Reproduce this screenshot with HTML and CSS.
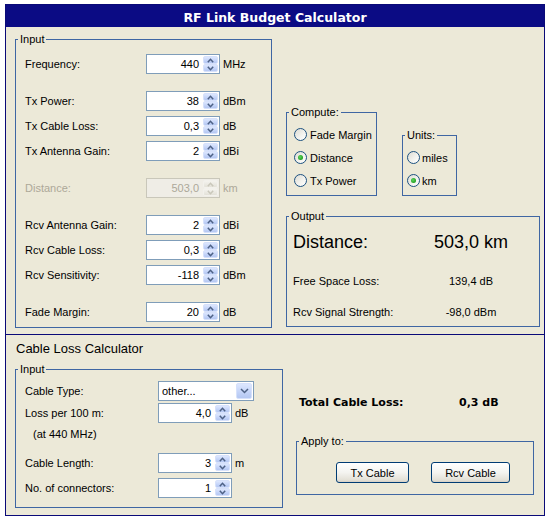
FILE: index.html
```html
<!DOCTYPE html>
<html>
<head>
<meta charset="utf-8">
<title>RF Link Budget Calculator</title>
<link rel="stylesheet" href="styles.css">
</head>
<body>
<div class="window">
  <div class="titlebar">RF Link Budget Calculator</div>

  <div class="upper">
    <fieldset class="grp in-grp">
      <legend>Input</legend>
      <div class="in-body">
        <div class="row"><span class="lbl">Frequency:</span><div class="spin"><span class="val">440</span><span class="sb"><i><svg viewBox="0 0 7 5"><path d="M0.8 4.2 L3.5 1.3 L6.2 4.2"/></svg></i><i><svg viewBox="0 0 7 5"><path d="M0.8 0.8 L3.5 3.7 L6.2 0.8"/></svg></i></span></div><span class="unit">MHz</span></div>

        <div class="row sp"><span class="lbl">Tx Power:</span><div class="spin"><span class="val">38</span><span class="sb"><i><svg viewBox="0 0 7 5"><path d="M0.8 4.2 L3.5 1.3 L6.2 4.2"/></svg></i><i><svg viewBox="0 0 7 5"><path d="M0.8 0.8 L3.5 3.7 L6.2 0.8"/></svg></i></span></div><span class="unit">dBm</span></div>
        <div class="row"><span class="lbl">Tx Cable Loss:</span><div class="spin"><span class="val">0,3</span><span class="sb"><i><svg viewBox="0 0 7 5"><path d="M0.8 4.2 L3.5 1.3 L6.2 4.2"/></svg></i><i><svg viewBox="0 0 7 5"><path d="M0.8 0.8 L3.5 3.7 L6.2 0.8"/></svg></i></span></div><span class="unit">dB</span></div>
        <div class="row"><span class="lbl">Tx Antenna Gain:</span><div class="spin"><span class="val">2</span><span class="sb"><i><svg viewBox="0 0 7 5"><path d="M0.8 4.2 L3.5 1.3 L6.2 4.2"/></svg></i><i><svg viewBox="0 0 7 5"><path d="M0.8 0.8 L3.5 3.7 L6.2 0.8"/></svg></i></span></div><span class="unit">dBi</span></div>

        <div class="row sp dis"><span class="lbl">Distance:</span><div class="spin"><span class="val">503,0</span><span class="sb"><i><svg viewBox="0 0 7 5"><path d="M0.8 4.2 L3.5 1.3 L6.2 4.2"/></svg></i><i><svg viewBox="0 0 7 5"><path d="M0.8 0.8 L3.5 3.7 L6.2 0.8"/></svg></i></span></div><span class="unit">km</span></div>

        <div class="row sp"><span class="lbl">Rcv Antenna Gain:</span><div class="spin"><span class="val">2</span><span class="sb"><i><svg viewBox="0 0 7 5"><path d="M0.8 4.2 L3.5 1.3 L6.2 4.2"/></svg></i><i><svg viewBox="0 0 7 5"><path d="M0.8 0.8 L3.5 3.7 L6.2 0.8"/></svg></i></span></div><span class="unit">dBi</span></div>
        <div class="row"><span class="lbl">Rcv Cable Loss:</span><div class="spin"><span class="val">0,3</span><span class="sb"><i><svg viewBox="0 0 7 5"><path d="M0.8 4.2 L3.5 1.3 L6.2 4.2"/></svg></i><i><svg viewBox="0 0 7 5"><path d="M0.8 0.8 L3.5 3.7 L6.2 0.8"/></svg></i></span></div><span class="unit">dB</span></div>
        <div class="row"><span class="lbl">Rcv Sensitivity:</span><div class="spin"><span class="val">-118</span><span class="sb"><i><svg viewBox="0 0 7 5"><path d="M0.8 4.2 L3.5 1.3 L6.2 4.2"/></svg></i><i><svg viewBox="0 0 7 5"><path d="M0.8 0.8 L3.5 3.7 L6.2 0.8"/></svg></i></span></div><span class="unit">dBm</span></div>

        <div class="row sp"><span class="lbl">Fade Margin:</span><div class="spin"><span class="val">20</span><span class="sb"><i><svg viewBox="0 0 7 5"><path d="M0.8 4.2 L3.5 1.3 L6.2 4.2"/></svg></i><i><svg viewBox="0 0 7 5"><path d="M0.8 0.8 L3.5 3.7 L6.2 0.8"/></svg></i></span></div><span class="unit">dB</span></div>
      </div>
    </fieldset>

    <div class="rcol">
      <div class="opts">
        <fieldset class="grp compute">
          <legend>Compute:</legend>
          <div class="opt-body">
            <div class="ropt"><span class="radio"></span><span>Fade Margin</span></div>
            <div class="ropt"><span class="radio on"></span><span>Distance</span></div>
            <div class="ropt"><span class="radio"></span><span>Tx Power</span></div>
          </div>
        </fieldset>
        <fieldset class="grp units">
          <legend>Units:</legend>
          <div class="opt-body">
            <div class="ropt"><span class="radio"></span><span>miles</span></div>
            <div class="ropt"><span class="radio on"></span><span>km</span></div>
          </div>
        </fieldset>
      </div>

      <fieldset class="grp output">
        <legend>Output</legend>
        <div class="out-body">
          <div class="orow big"><span class="olbl">Distance:</span><span class="oval">503,0 km</span></div>
          <div class="orow fsl"><span class="olbl">Free Space Loss:</span><span class="oval">139,4 dB</span></div>
          <div class="orow rss"><span class="olbl">Rcv Signal Strength:</span><span class="oval">-98,0 dBm</span></div>
        </div>
      </fieldset>
    </div>
  </div>

  <div class="lower">
    <div class="heading">Cable Loss Calculator</div>
    <div class="lower-body">
      <fieldset class="grp cin">
        <legend>Input</legend>
        <div class="cin-body">
          <div class="crow"><span class="clbl">Cable Type:</span><div class="select"><span class="seltext">other...</span><span class="dd"><svg viewBox="0 0 9 6"><path d="M1 1 L4.5 4.5 L8 1"/></svg></span></div></div>
          <div class="crow loss"><span class="clbl">Loss per 100 m:</span><div class="spin"><span class="val">4,0</span><span class="sb"><i><svg viewBox="0 0 7 5"><path d="M0.8 4.2 L3.5 1.3 L6.2 4.2"/></svg></i><i><svg viewBox="0 0 7 5"><path d="M0.8 0.8 L3.5 3.7 L6.2 0.8"/></svg></i></span></div><span class="unit">dB</span></div>
          <div class="crow at"><span class="atlbl">(at 440 MHz)</span></div>
          <div class="crow len"><span class="clbl">Cable Length:</span><div class="spin"><span class="val">3</span><span class="sb"><i><svg viewBox="0 0 7 5"><path d="M0.8 4.2 L3.5 1.3 L6.2 4.2"/></svg></i><i><svg viewBox="0 0 7 5"><path d="M0.8 0.8 L3.5 3.7 L6.2 0.8"/></svg></i></span></div><span class="unit">m</span></div>
          <div class="crow con"><span class="clbl">No. of connectors:</span><div class="spin"><span class="val">1</span><span class="sb"><i><svg viewBox="0 0 7 5"><path d="M0.8 4.2 L3.5 1.3 L6.2 4.2"/></svg></i><i><svg viewBox="0 0 7 5"><path d="M0.8 0.8 L3.5 3.7 L6.2 0.8"/></svg></i></span></div></div>
        </div>
      </fieldset>

      <div class="lcol">
        <div class="total"><span class="tlbl">Total Cable Loss:</span><span class="tval">0,3 dB</span></div>
        <fieldset class="grp apply">
          <legend>Apply to:</legend>
          <div class="apply-body">
            <button class="btn tx">Tx Cable</button>
            <button class="btn rcv">Rcv Cable</button>
          </div>
        </fieldset>
      </div>
    </div>
  </div>
</div>
</body>
</html>
```

FILE: styles.css
```css
* { box-sizing: border-box; }

body {
  margin: 0;
  background: #ffffff;
  font-family: "Liberation Sans", Arial, sans-serif;
  font-size: 11px;
  color: #000;
}

.window {
  width: 540px;
  height: 512px;
  margin: 4px 0 0 5px;
  border: 1px solid #0a0a78;
  background: #ece9d8;
  display: flex;
  flex-direction: column;
}

.titlebar {
  flex: none;
  height: 22px;
  background: #0b0b84;
  color: #fff;
  font-family: "DejaVu Sans", Verdana, sans-serif;
  font-weight: bold;
  font-size: 12.5px;
  display: flex;
  align-items: center;
  justify-content: center;
  padding-top: 2px;
}

/* group boxes */
.grp {
  margin: 0;
  padding: 0;
  min-width: 0;
  border: 1px solid #3f66a3;
}
.grp > legend {
  margin-left: 2px;
  padding: 0 2px;
  font-size: 11px;
  line-height: 13px;
}

/* upper area */
.upper {
  flex: none;
  height: 307px;
  display: flex;
  padding: 6px 0 0 9px;
  gap: 14px;
}

.in-grp { width: 257px; align-self: flex-start; }
.in-body { padding: 8px 0 5px 9px; }

.row {
  display: flex;
  align-items: center;
  height: 20px;
}
.row + .row { margin-top: 5px; }
.row.sp { margin-top: 17px; }
.lbl { width: 121px; }
.unit { margin-left: 3px; }

/* spinner */
.spin {
  width: 74px;
  height: 20px;
  border: 1px solid #7f9db9;
  background: #fff;
  display: flex;
}
.val {
  flex: 1;
  text-align: right;
  padding-right: 4px;
  line-height: 18px;
}
.sb {
  width: 16px;
  display: flex;
  flex-direction: column;
  padding: 1px 1px 1px 0;
}
.sb i {
  flex: 1;
  display: flex;
  align-items: center;
  justify-content: center;
  border-radius: 2px;
  border: 1px solid #d6e1fb;
  background: linear-gradient(180deg, #dde7fe 0%, #c3d3f8 60%, #b4c7f2 100%);
}
.sb svg {
  width: 7px;
  height: 5px;
  display: block;
}
.sb path,
.dd path {
  fill: none;
  stroke: #4d6185;
  stroke-width: 1.5;
}

.row.dis { color: #aca899; }
.row.dis .spin {
  border-color: #c9c7ba;
  background: #efede6;
}
.row.dis .sb i {
  border-color: #f2f1ec;
  background: linear-gradient(180deg, #f4f3ee, #e3e1d8);
}
.row.dis .sb path { stroke: #c9c7ba; }

/* right column */
.rcol {
  width: 254px;
  margin-top: 73px;
  display: flex;
  flex-direction: column;
}
.opts {
  display: flex;
  align-items: flex-end;
  gap: 25px;
}
.compute { width: 91px; }
.units { width: 55px; }
.opt-body { padding: 4px 0 3px 7px; }
.units .opt-body { padding-left: 4px; }

.ropt {
  display: flex;
  align-items: center;
  gap: 3px;
  height: 23px;
}
.units .ropt { gap: 2px; }

.radio {
  width: 13px;
  height: 13px;
  border: 1px solid #1c5180;
  border-radius: 50%;
  background: linear-gradient(135deg, #dcdbd3 0%, #f4f4f0 60%, #ffffff 100%);
  display: flex;
  align-items: center;
  justify-content: center;
  flex: none;
}
.radio.on::after {
  content: "";
  width: 5px;
  height: 5px;
  border-radius: 50%;
  background: radial-gradient(circle at 40% 40%, #5fd45f, #21a121 70%);
}

.output {
  margin-top: 14px;
  width: 254px;
}
.out-body { padding: 7px 0 4px 6px; }
.orow {
  display: flex;
  align-items: center;
  height: 20px;
}
.orow.big {
  height: 24px;
  font-size: 18px;
}
.orow.fsl { margin-top: 17px; }
.orow.rss { margin-top: 11px; }
.olbl { width: 127px; }
.oval { width: 102px; text-align: center; }

/* lower area */
.lower {
  flex: 1;
  border-top: 1px solid #0a0a78;
  padding: 6px 0 0 9px;
}
.heading {
  font-size: 13px;
  line-height: 16px;
  margin-left: 1px;
}
.lower-body {
  display: flex;
  margin-top: 6px;
}
.cin { width: 268px; }
.cin-body { padding: 5px 0 9px 9px; }
.crow {
  display: flex;
  align-items: center;
  height: 20px;
}
.crow.loss { margin-top: 2px; }
.crow.at { height: 14px; margin-top: 4px; }
.crow.len { margin-top: 12px; }
.crow.con { margin-top: 5px; }
.clbl { width: 133px; }
.atlbl { padding-left: 8px; }

.select {
  width: 96px;
  height: 20px;
  border: 1px solid #7f9db9;
  background: #fff;
  display: flex;
}
.seltext {
  flex: 1;
  padding-left: 3px;
  line-height: 18px;
}
.dd {
  width: 16px;
  margin: 1px 1px 1px 0;
  border-radius: 2px;
  border: 1px solid #d6e1fb;
  background: linear-gradient(180deg, #dde7fe 0%, #c3d3f8 60%, #b4c7f2 100%);
  display: flex;
  align-items: center;
  justify-content: center;
}
.dd svg { width: 9px; height: 6px; display: block; }

.lcol {
  width: 238px;
  margin-left: 13px;
  display: flex;
  flex-direction: column;
}
.total {
  margin-top: 32px;
  padding-left: 3px;
  display: flex;
  line-height: 16px;
  font-family: "DejaVu Sans", Verdana, sans-serif;
  font-weight: bold;
  font-size: 11px;
}
.tlbl { width: 160px; }

.apply {
  margin-top: 24px;
  width: 238px;
}
.apply-body {
  display: flex;
  gap: 22px;
  padding: 14px 0 11px 39px;
}
.btn {
  height: 21px;
  padding: 0;
  border: 1px solid #003c74;
  border-radius: 3px;
  background: linear-gradient(180deg, #ffffff 0%, #f4f4f0 50%, #e3e0d6 90%, #d6d0c5 100%);
  font-family: "Liberation Sans", Arial, sans-serif;
  font-size: 11px;
  color: #000;
}
.btn.tx { width: 73px; }
.btn.rcv { width: 79px; }
```
